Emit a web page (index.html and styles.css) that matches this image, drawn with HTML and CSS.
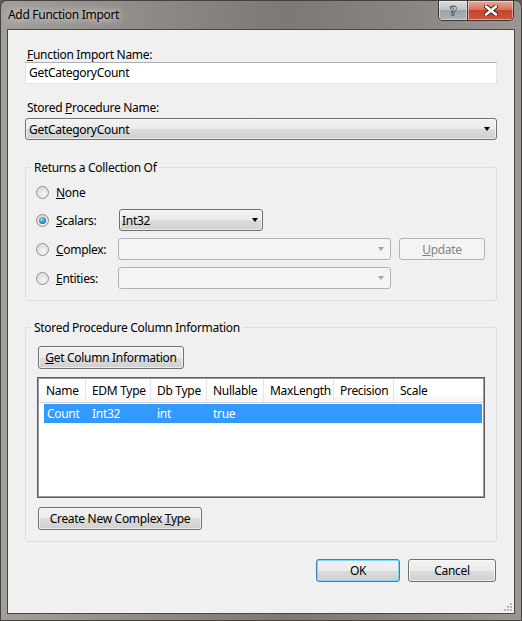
FILE: index.html
```html
<!DOCTYPE html>
<html lang="en">
<head>
    <meta charset="UTF-8">
    <title>Add Function Import</title>
    <link rel="stylesheet" href="styles.css">
</head>
<body>
    <div class="window">
        <div class="titlebar">
            <span class="title">Add Function Import</span>
            <div class="caption-buttons">
                <span class="cap help">?</span>
                <span class="cap close">
                    <svg width="14" height="11" viewBox="0 0 14 11">
                        <path d="M2 1.5 L12 9.5 M12 1.5 L2 9.5" stroke="#3a2a26" stroke-width="4.6" stroke-linecap="round"/>
                        <path d="M2 1.5 L12 9.5 M12 1.5 L2 9.5" stroke="#ffffff" stroke-width="2.6" stroke-linecap="round"/>
                    </svg>
                </span>
            </div>
        </div>

        <div class="client">
            <label class="field-label"><u>F</u>unction Import Name:</label>
            <div class="textbox">GetCategoryCount</div>

            <label class="field-label spaced">Stored <u>P</u>rocedure Name:</label>
            <div class="combo">GetCategoryCount<span class="arrow"></span></div>

            <fieldset class="group returns">
                <legend>Returns a Collection Of</legend>
                <div class="choice first">
                    <span class="radio"></span>
                    <span class="choice-label"><u>N</u>one</span>
                </div>
                <div class="choice">
                    <span class="radio checked"></span>
                    <span class="choice-label"><u>S</u>calars:</span>
                    <div class="combo scalar">Int32<span class="arrow"></span></div>
                </div>
                <div class="choice">
                    <span class="radio"></span>
                    <span class="choice-label"><u>C</u>omplex:</span>
                    <div class="combo disabled"><span class="arrow"></span></div>
                    <button class="btn disabled update"><u>U</u>pdate</button>
                </div>
                <div class="choice">
                    <span class="radio"></span>
                    <span class="choice-label"><u>E</u>ntities:</span>
                    <div class="combo disabled"><span class="arrow"></span></div>
                </div>
            </fieldset>

            <fieldset class="group columns">
                <legend>Stored Procedure Column Information</legend>
                <button class="btn get-info"><u>G</u>et Column Information</button>
                <div class="listview">
                    <div class="lv-header">
                        <span>Name</span>
                        <span>EDM Type</span>
                        <span>Db Type</span>
                        <span>Nullable</span>
                        <span>MaxLength</span>
                        <span>Precision</span>
                        <span>Scale</span>
                    </div>
                    <div class="lv-row selected">
                        <span>Count</span>
                        <span>Int32</span>
                        <span>int</span>
                        <span>true</span>
                        <span></span>
                        <span></span>
                        <span></span>
                    </div>
                </div>
                <button class="btn create-type">Create New Complex <u>T</u>ype</button>
            </fieldset>

            <div class="actions">
                <button class="btn ok">OK</button>
                <button class="btn cancel">Cancel</button>
            </div>

            <svg class="grip" width="10" height="10" viewBox="0 0 10 10">
                <rect x="7" y="1" width="2" height="2" fill="#b7b7b7"/>
                <rect x="4" y="4" width="2" height="2" fill="#b7b7b7"/>
                <rect x="7" y="4" width="2" height="2" fill="#b7b7b7"/>
                <rect x="1" y="7" width="2" height="2" fill="#b7b7b7"/>
                <rect x="4" y="7" width="2" height="2" fill="#b7b7b7"/>
                <rect x="7" y="7" width="2" height="2" fill="#b7b7b7"/>
            </svg>
        </div>
    </div>
</body>
</html>
```

FILE: styles.css
```css
body {
    margin: 0;
    width: 522px;
    height: 621px;
    overflow: hidden;
    background-color: #5f5b58;
    font-family: "Noto Sans", "Open Sans", sans-serif;
    font-size: 12px;
    letter-spacing: -0.3px;
    color: #000;
}

.window {
    position: relative;
    display: flex;
    flex-direction: column;
    box-sizing: border-box;
    height: 621px;
    padding: 0 6px 6px;
    border: 1px solid #45413e;
    border-radius: 7px 7px 0 0;
    background: linear-gradient(90deg, #a29e9a 0%, #8e8985 30%, #7d7874 55%, #8b8682 80%, #9a9692 100%);
}

.titlebar {
    height: 28px;
    flex: none;
}

.title {
    display: inline-block;
    margin-top: 6px;
    margin-left: 1px;
    line-height: 16px;
    color: #000;
    text-shadow: 0 0 6px #e4e2e0, 0 0 10px #d8d6d3;
}

.caption-buttons {
    position: absolute;
    top: 0;
    right: 7px;
    display: flex;
    height: 19px;
    border: 1px solid #3b3735;
    border-top: none;
    border-radius: 0 0 5px 5px;
    overflow: hidden;
}

.cap {
    display: flex;
    align-items: center;
    justify-content: center;
    height: 19px;
    box-shadow: inset 0 0 0 1px rgba(255, 255, 255, 0.45);
}

.help {
    width: 28px;
    border-right: 1px solid #3b3735;
    background: linear-gradient(#dadcdf 0%, #bfc2c6 45%, #9ea2a7 50%, #aeb2b7 100%);
    font-family: "DejaVu Sans", sans-serif;
    font-weight: bold;
    font-size: 13px;
    color: #fff;
    -webkit-text-stroke: 0.8px #3a3a3a;
}

.close {
    width: 45px;
    background: linear-gradient(#e9a998 0%, #d7735f 45%, #c4442c 50%, #cf563c 100%);
}

.client {
    position: relative;
    flex: 1;
    box-sizing: border-box;
    padding: 17px 17px 0;
    border: 1px solid #474747;
    background-color: #f0f0f0;
}

.field-label {
    display: block;
    margin-left: 2px;
    line-height: 15px;
}

.field-label.spaced {
    margin-top: 16px;
}

.textbox {
    box-sizing: border-box;
    height: 22px;
    padding: 0 3px;
    line-height: 20px;
    border: 1px solid #e2e3ea;
    border-top-color: #abadb3;
    background-color: #fff;
}

.combo {
    display: flex;
    align-items: center;
    justify-content: space-between;
    box-sizing: border-box;
    height: 22px;
    margin-top: 3px;
    padding: 0 6px 0 3px;
    border: 1px solid #707070;
    border-radius: 3px;
    background: linear-gradient(#f2f2f2 0%, #ebebeb 50%, #dddddd 50%, #cfcfcf 100%);
    box-shadow: inset 0 0 0 1px rgba(255, 255, 255, 0.6);
}

.arrow {
    width: 0;
    height: 0;
    border-left: 3.5px solid transparent;
    border-right: 3.5px solid transparent;
    border-top: 4px solid #000;
}

.combo.scalar {
    width: 144px;
    margin: 0 0 0 1px;
    padding: 0 4px 0 2px;
}

.combo.disabled {
    width: 273px;
    margin: 0;
    justify-content: flex-end;
    padding-right: 6px;
    border-color: #adb2b5;
    background: #f4f4f4;
    box-shadow: none;
}

.combo.disabled .arrow {
    border-top-color: #a3a3a3;
}

.group {
    margin: 20px 0 0;
    border: 1px solid #d5dfe5;
    border-radius: 3px;
    min-width: 0;
}

.group legend {
    padding: 0 3px;
    line-height: 15px;
}

.returns {
    padding: 7px 10px 11px;
}

.returns legend {
    margin-left: -5px;
}

.choice {
    display: flex;
    align-items: center;
    height: 22px;
    margin-top: 7px;
}

.choice.first {
    height: 20px;
    margin-top: 0;
}

.radio {
    position: relative;
    box-sizing: border-box;
    width: 13px;
    height: 13px;
    border: 1px solid #8e8f8f;
    border-radius: 50%;
    background: radial-gradient(circle at 60% 65%, #f4f4f4 0%, #dedede 70%, #cfcfcf 100%);
}

.radio.checked::after {
    content: "";
    position: absolute;
    top: 2px;
    left: 2px;
    width: 7px;
    height: 7px;
    border-radius: 50%;
    background: radial-gradient(circle at 40% 35%, #9fe0fb 0%, #3a9ad4 45%, #19508a 100%);
}

.choice-label {
    width: 62px;
    margin-left: 7px;
    line-height: 15px;
}

.btn {
    box-sizing: border-box;
    height: 23px;
    padding: 0;
    border: 1px solid #707070;
    border-radius: 3px;
    background: linear-gradient(#f2f2f2 0%, #ebebeb 50%, #dddddd 50%, #cfcfcf 100%);
    box-shadow: inset 0 0 0 1px rgba(255, 255, 255, 0.6);
    font-family: inherit;
    font-size: 12px;
    letter-spacing: inherit;
    color: #000;
}

.btn.disabled {
    border-color: #adb2b5;
    background: #f4f4f4;
    box-shadow: none;
    color: #838383;
}

.btn.update {
    width: 86px;
    height: 22px;
    margin-left: 8px;
}

.columns {
    margin-top: 19px;
    padding: 11px 11px 11px 12px;
}

.columns legend {
    margin-left: -7px;
}

.btn.get-info {
    display: block;
    width: 146px;
}

.listview {
    height: 121px;
    box-sizing: border-box;
    margin: 8px 0 0 -1px;
    padding: 1px;
    border: 1px solid #5d5d5d;
    box-shadow: inset 0 0 0 1px #9a9a9a;
    background-color: #fff;
}

.lv-header,
.lv-row {
    display: grid;
    grid-template-columns: 47px 65px 56px 57px 70px 60px 1fr;
}

.lv-header {
    height: 24px;
    box-sizing: border-box;
    border-bottom: 1px solid #d5d5d5;
    background: linear-gradient(#ffffff 0%, #ffffff 60%, #f3f4f6 100%);
}

.lv-header span {
    padding-left: 6px;
    line-height: 23px;
    border-right: 1px solid #e3e5e9;
}

.lv-header span:first-child {
    padding-left: 7px;
}

.lv-header span:last-child {
    border-right: none;
}

.lv-row {
    height: 19px;
    margin: 1px 1px 0 5px;
    grid-template-columns: 42px 65px 56px 57px 70px 60px 1fr;
}

.lv-row span {
    padding-left: 6px;
    line-height: 19px;
}

.lv-row span:first-child {
    padding-left: 3px;
}

.lv-row.selected {
    background-color: #3399ff;
    color: #fff;
}

.btn.create-type {
    display: block;
    width: 164px;
    margin-top: 9px;
}

.actions {
    display: flex;
    justify-content: flex-end;
    gap: 8px;
    margin-top: 17px;
    padding-right: 1px;
}

.btn.ok {
    width: 84px;
    border-color: #3c7fb1;
    box-shadow: inset 0 0 0 1px #7fd6f7;
}

.btn.cancel {
    width: 88px;
}

.grip {
    position: absolute;
    right: 1px;
    bottom: 1px;
}
```
